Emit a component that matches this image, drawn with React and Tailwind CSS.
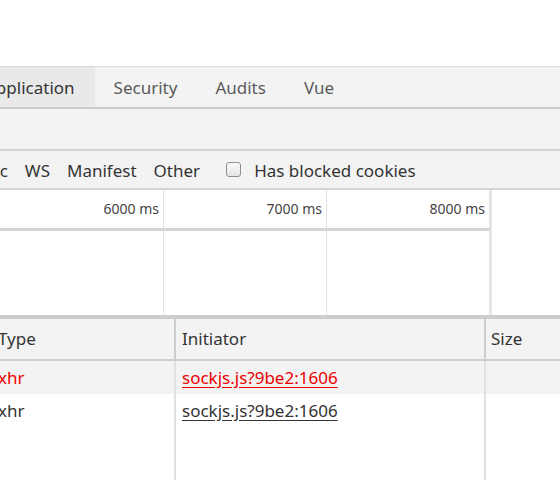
import { Fragment } from "react";

const font = { fontFamily: '"Noto Sans", "Open Sans", sans-serif' };

const tabs = [
  { label: "Application", active: true },
  { label: "Security" },
  { label: "Audits" },
  { label: "Vue" },
];

const filters = ["Doc", "WS", "Manifest", "Other"];

const ticks = ["6000 ms", "7000 ms", "8000 ms"];

const rows = [
  { type: "xhr", initiator: "sockjs.js?9be2:1606", failed: true },
  { type: "xhr", initiator: "sockjs.js?9be2:1606" },
];

export default function App() {
  return (
    <div
      className="h-[480px] w-[560px] overflow-hidden bg-white text-[#333]"
      style={font}
    >
      <div className="h-[66px]" />

      {/* panel tabs */}
      <div className="flex h-[43px] border-t border-b-2 border-t-[#dadada] border-b-[#cbcbcb] bg-[#f3f3f3] text-[17px]">
        <div className="-ml-[34px] flex">
          {tabs.map((t) => (
            <div
              key={t.label}
              className={
                "flex items-center px-[19px] pt-[1px] " +
                (t.active ? "bg-[#e9e9e9] pr-[20px] text-[#333]" : "text-[#5a5a5a]")
              }
            >
              {t.label}
            </div>
          ))}
        </div>
      </div>

      {/* toolbar */}
      <div className="h-[42px] border-b-2 border-[#d3d3d3] bg-[#f3f3f3]" />

      {/* filter bar */}
      <div className="flex h-[39px] items-center border-b-2 border-[#d3d3d3] bg-[#f3f3f3] pt-[3px] text-[17px]">
        <div className="-ml-[23px] flex items-center gap-[17px]">
          {filters.map((f) => (
            <span key={f}>{f}</span>
          ))}
        </div>
        <label className="ml-[26px] flex items-center gap-[13px]">
          <span className="-mt-[3px] h-[15px] w-[15px] rounded-[3px] border border-[#8f8f8f] bg-gradient-to-b from-[#fafafa] to-[#e4e4e4]" />
          <span>Has blocked cookies</span>
        </label>
      </div>

      {/* timeline overview */}
      <div className="flex h-[125px]">
        <div className="flex w-[491px] flex-col">
          <div className="flex h-[38px]">
            {ticks.map((t, i) => (
              <div
                key={t}
                className={
                  "flex items-center justify-end border-r border-[#e0e0e0] pr-[4px] pb-[2px] text-[14px] text-[#444] " +
                  (i === 0 ? "w-[164px]" : "w-[163px]")
                }
              >
                {t}
              </div>
            ))}
          </div>
          <div className="h-[3px] bg-[#d4d4d4]" />
          <div className="flex flex-1">
            {ticks.map((t, i) => (
              <div
                key={t}
                className={
                  "border-r border-[#e3e3e3] " +
                  (i === 0 ? "w-[164px]" : i === 2 ? "w-[164px] border-r-2" : "w-[163px]")
                }
              />
            ))}
          </div>
        </div>
        <div className="-ml-[1px] w-[2px] bg-[#e6e6e6]" />
      </div>

      {/* requests table */}
      <div className="h-[4px] bg-[#cdcdcd]" />
      <div className="grid grid-cols-[174px_2px_308px_2px_1fr] text-[17px]">
        <div className="flex h-[40px] items-center bg-[#f3f3f3]">
          <span className="-ml-[2px]">Type</span>
        </div>
        <div className="bg-[#cdcdcd]" />
        <div className="flex items-center bg-[#f3f3f3] pl-[6px]">Initiator</div>
        <div className="bg-[#cdcdcd]" />
        <div className="flex items-center bg-[#f3f3f3] pl-[5px]">Size</div>

        <div className="col-span-5 h-[2px] bg-[#cdcdcd]" />

        {rows.map((r, i) => {
          const bg = i % 2 === 0 ? "bg-[#f3f3f3]" : "bg-white";
          const color = r.failed ? "text-[#ee0000]" : "text-[#333]";
          return (
            <Fragment key={i}>
              <div className={"flex h-[33px] items-center " + bg + " " + color}>
                <span className="-ml-[2px]">{r.type}</span>
              </div>
              <div className="bg-[#e1e1e1]" />
              <div className={"flex items-center pl-[6px] " + bg + " " + color}>
                <span className="underline underline-offset-[3px]">{r.initiator}</span>
              </div>
              <div className="bg-[#e1e1e1]" />
              <div className={bg} />
            </Fragment>
          );
        })}

        <div className="h-[60px]" />
        <div className="bg-[#e1e1e1]" />
        <div />
        <div className="bg-[#e1e1e1]" />
        <div />
      </div>
    </div>
  );
}
